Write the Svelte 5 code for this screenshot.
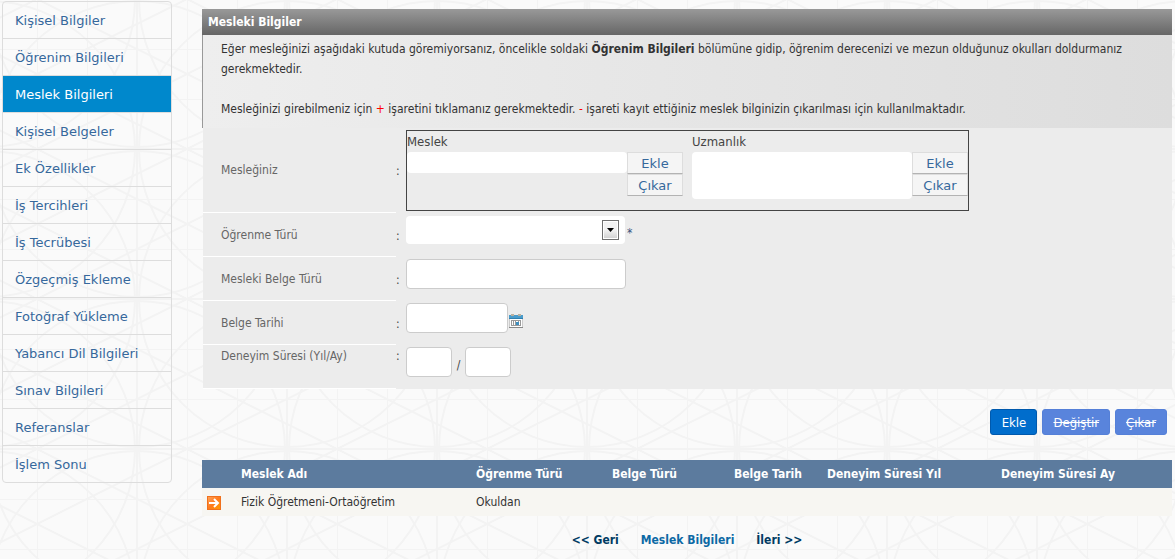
<script>
  const menu = [
    'Kişisel Bilgiler',
    'Öğrenim Bilgileri',
    'Meslek Bilgileri',
    'Kişisel Belgeler',
    'Ek Özellikler',
    'İş Tercihleri',
    'İş Tecrübesi',
    'Özgeçmiş Ekleme',
    'Fotoğraf Yükleme',
    'Yabancı Dil Bilgileri',
    'Sınav Bilgileri',
    'Referanslar',
    'İşlem Sonu',
  ];
  let active = $state('Meslek Bilgileri');

  let form = $state({ meslek: '', uzmanlik: '', tur: '', belge: '', tarih: '', yil: '', ay: '' });

  const rows = [
    { ad: 'Fizik Öğretmeni-Ortaöğretim', tur: 'Okuldan', belge: '', tarih: '', yil: '', ay: '' },
  ];
</script>

<div class="page">
  <nav class="side" aria-label="Özgeçmiş">
    {#each menu as item}
      <a href="#{item}" class:active={item === active} onclick={() => (active = item)}>{item}</a>
    {/each}
  </nav>

  <main>
    <h1>Mesleki Bilgiler</h1>
    <div class="info">
      <p>
        Eğer mesleğinizi aşağıdaki kutuda göremiyorsanız, öncelikle soldaki <b>Öğrenim Bilgileri</b> bölümüne gidip,
        öğrenim derecenizi ve mezun olduğunuz okulları doldurmanız gerekmektedir.
      </p>
      <p>
        Mesleğinizi girebilmeniz için <span class="red">+</span> işaretini tıklamanız gerekmektedir. <span class="red">-</span>
        işareti kayıt ettiğiniz meslek bilginizin çıkarılması için kullanılmaktadır.
      </p>
    </div>

    <form onsubmit={(e) => e.preventDefault()}>
      <div class="row tall">
        <span class="label">Mesleğiniz</span>
        <span class="colon">:</span>
        <div class="picker">
          <div class="pick">
            <label for="meslek">Meslek</label>
            <div class="pick-body">
              <input id="meslek" class="plain" bind:value={form.meslek} />
              <div class="pick-btns">
                <button type="button">Ekle</button>
                <button type="button">Çıkar</button>
              </div>
            </div>
          </div>
          <div class="pick">
            <label for="uzmanlik">Uzmanlık</label>
            <div class="pick-body">
              <textarea id="uzmanlik" class="plain" bind:value={form.uzmanlik}></textarea>
              <div class="pick-btns">
                <button type="button">Ekle</button>
                <button type="button">Çıkar</button>
              </div>
            </div>
          </div>
        </div>
      </div>

      <div class="row">
        <label class="label" for="tur">Öğrenme Türü</label>
        <span class="colon">:</span>
        <div class="field">
          <div class="select">
            <select id="tur" bind:value={form.tur}>
              <option value=""></option>
              <option value="okul">Okuldan</option>
            </select>
            <span class="arrow">
              <svg width="7" height="4" viewBox="0 0 7 4"><path d="M0 0h7L3.5 4z" /></svg>
            </span>
          </div>
          <span class="star">*</span>
        </div>
      </div>

      <div class="row">
        <label class="label" for="belge">Mesleki Belge Türü</label>
        <span class="colon">:</span>
        <div class="field"><input id="belge" class="wide" bind:value={form.belge} /></div>
      </div>

      <div class="row">
        <label class="label" for="tarih">Belge Tarihi</label>
        <span class="colon">:</span>
        <div class="field">
          <input id="tarih" class="date" bind:value={form.tarih} />
          <button type="button" class="cal" aria-label="Takvim">
            <svg width="15" height="15" viewBox="0 0 15 15">
              <path fill="#fff" stroke="#ccc" d="M.5 4.500h13v9H.5z" />
              <path fill="#4a9ccb" d="M0 1h14v4H0z" />
              <path fill="#2f7fb0" d="M0 4h14v1H0z" />
              <path fill="#b9b0a0" d="M2 0h3v2H2zM9 0h3v2H9z" />
              <path stroke="#999" fill="none" d="M2.500 6v6M4.500 6v6M6.500 6v6M9.500 6v6M11.500 6v6M2 6.500h10M2 11.500h10" />
              <path fill="#3d8fc0" d="M7 8h3v3H7z" />
              <path fill="#888" d="M0 13h14v1H0z" />
            </svg>
          </button>
        </div>
      </div>

      <div class="row top">
        <label class="label" for="yil">Deneyim Süresi (Yıl/Ay)</label>
        <span class="colon">:</span>
        <div class="field">
          <input id="yil" class="num" bind:value={form.yil} />
          <label class="slash" for="ay">/</label>
          <input id="ay" class="num" bind:value={form.ay} />
        </div>
      </div>
    </form>

    <div class="actions">
      <button type="button">Ekle</button>
      <button type="button" disabled>Değiştir</button>
      <button type="button" disabled>Çıkar</button>
    </div>

    <table>
      <colgroup>
        <col class="c-icon" /><col class="c-ad" /><col class="c-tur" /><col class="c-belge" />
        <col class="c-tarih" /><col class="c-yil" /><col />
      </colgroup>
      <thead>
        <tr>
          <th></th>
          <th>Meslek Adı</th>
          <th>Öğrenme Türü</th>
          <th>Belge Türü</th>
          <th>Belge Tarih</th>
          <th>Deneyim Süresi Yıl</th>
          <th>Deneyim Süresi Ay</th>
        </tr>
      </thead>
      <tbody>
        {#each rows as r}
          <tr>
            <td class="go">
              <button type="button" aria-label="Seç">
                <svg width="14" height="14" viewBox="0 0 14 14">
                  <defs>
                    <linearGradient id="org" x1="0" y1="0" x2="1" y2="1">
                      <stop offset="0" stop-color="#ffa45c" />
                      <stop offset=".5" stop-color="#ff7a1c" />
                      <stop offset="1" stop-color="#ff9d00" />
                    </linearGradient>
                  </defs>
                  <rect x=".5" y=".5" width="13" height="13" fill="url(#org)" stroke="#f0701c" />
                  <path d="M2 7h9M7 3l4 4-4 4" fill="none" stroke="#fff" stroke-width="2" />
                </svg>
              </button>
            </td>
            <td>{r.ad}</td>
            <td>{r.tur}</td>
            <td>{r.belge}</td>
            <td>{r.tarih}</td>
            <td>{r.yil}</td>
            <td>{r.ay}</td>
          </tr>
        {/each}
      </tbody>
    </table>

    <div class="pager">
      <a href="#geri">&lt;&lt; Geri</a>
      <a href="#meslek" class="current">Meslek Bilgileri</a>
      <a href="#ileri">İleri &gt;&gt;</a>
    </div>
  </main>
</div>

<style>
  /* faint geometric tile, repeats every 150px */
  :global(body) {
    background: #fafafa
      url("data:image/svg+xml,%3Csvg xmlns='http://www.w3.org/2000/svg' width='150' height='150' fill='none' stroke='%23f3f3f3' stroke-width='2'%3E%3Cpath stroke-width='1' d='M50.500 0v150M100.500 0v150M0 50.500h150M0 100.500h150'/%3E%3Cpath d='M0 0v150M150 0v150M0 0h150M0 150h150M0-25l150 75M0 50l150 75M0 125l150 75M0 25L150-50M0 100L150 25M0 175L150 100'/%3E%3Ccircle r='148'/%3E%3Ccircle cx='150' r='148'/%3E%3Ccircle cy='150' r='148'/%3E%3Ccircle cx='150' cy='150' r='148'/%3E%3C/svg%3E")
      -13px -1px;
  }

  .page {
    display: flex;
    align-items: flex-start;
    gap: 30px;
    padding: 1px 3px 0 2px;
    font-family: 'DejaVu Sans Condensed', 'DejaVu Sans', Tahoma, sans-serif;
    font-stretch: condensed;
    font-size: 12px;
    color: #333;
  }
  button, input, select, textarea {
    box-sizing: border-box;
    margin: 0;
    font: inherit;
  }

  .side {
    flex: 0 0 168px;
    border: 1px solid #ddd;
    border-radius: 4px;
    font-family: 'DejaVu Sans', Verdana, sans-serif;
    font-stretch: normal;
    font-size: 13px;
  }
  .side a {
    display: block;
    height: 36px;
    padding-left: 12px;
    border-bottom: 1px solid #ddd;
    line-height: 37px;
    color: #36689c;
    text-decoration: none;
  }
  .side a:last-child { border-bottom: 0; }
  .side a.active {
    background: #0088cc;
    color: #fff;
  }

  main {
    flex: 1;
    min-width: 0;
    padding-top: 8px;
  }
  h1 {
    margin: 0;
    padding-left: 6px;
    height: 26px;
    line-height: 26px;
    font-size: 12px;
    color: #fff;
    background: linear-gradient(#999, #666);
  }
  .info {
    box-sizing: border-box;
    height: 93px;
    padding: 4px 40px 0 18px;
    border-left: 1px solid #999;
    line-height: 20px;
    background: linear-gradient(90deg, #eee, #ddd);
  }
  .info p { margin: 0 0 20px; }
  .red { color: #f00; }

  form {
    margin-left: 1px;
    background: #ececec;
    color: #666;
  }
  .row {
    display: grid;
    grid-template-columns: 193px 10px 1fr;
    height: 44px;
  }
  .row.tall { height: 85px; }
  .label {
    display: flex;
    align-items: center;
    padding-left: 18px;
    border-bottom: 1px solid #fff;
  }
  .colon {
    align-self: center;
    padding-top: 1px;
    color: #444;
  }
  .top .label {
    align-items: flex-start;
    padding-top: 4px;
  }
  .top .colon {
    align-self: start;
    padding-top: 4px;
  }
  .field {
    display: flex;
    align-items: flex-start;
    padding-top: 2px;
  }
  .field input {
    height: 30px;
    border: 1px solid #ccc;
    border-radius: 4px;
    background: #fff;
  }
  .wide { width: 220px; }
  .date { width: 102px; }
  .num { width: 46px; }
  .slash {
    width: 13px;
    padding-top: 11px;
    text-align: center;
    color: #444;
  }
  .cal {
    padding: 0;
    margin: 11px 0 0 1px;
    border: 0;
    background: none;
    line-height: 0;
  }

  .picker {
    align-self: start;
    justify-self: start;
    display: flex;
    gap: 9px;
    box-sizing: border-box;
    height: 81px;
    margin-top: 2px;
    border: 1px solid #444;
    font-size: 13px;
    color: #444;
  }
  .pick label {
    display: block;
    height: 21px;
    line-height: 21px;
  }
  .pick-body { display: flex; }
  .plain {
    width: 220px;
    height: 21px;
    border: 0;
    border-radius: 4px;
    background: #fff;
    resize: none;
  }
  textarea.plain { height: 47px; }
  .pick-btns {
    display: flex;
    flex-direction: column;
  }
  .pick-btns button {
    width: 56px;
    height: 22px;
    padding: 0;
    border: 1px solid #ddd;
    border-bottom-color: #b3b3b3;
    background: #f5f5f5;
    font-family: 'DejaVu Sans', Verdana, sans-serif;
    font-stretch: normal;
    color: #36689c;
  }

  .select {
    position: relative;
    width: 219px;
    height: 28px;
    margin-top: 1px;
  }
  .select select {
    width: 100%;
    height: 100%;
    border: 0;
    border-radius: 4px;
    background: #fff;
    appearance: none;
  }
  .arrow {
    position: absolute;
    right: 6px;
    top: 4px;
    display: flex;
    align-items: center;
    justify-content: center;
    box-sizing: border-box;
    width: 17px;
    height: 20px;
    border: 1px solid #707070;
    background: linear-gradient(#f2f2f2 50%, #cfcfcf);
    box-shadow: inset 0 0 0 1px #fff;
    pointer-events: none;
  }
  .star {
    padding: 11px 0 0 2px;
    color: #36527c;
  }

  .actions {
    display: flex;
    justify-content: flex-end;
    gap: 5px;
    padding: 20px 5px 25px 0;
  }
  .actions button {
    min-width: 47px;
    height: 26px;
    padding: 0 10px;
    border: 1px solid #0059ad;
    border-radius: 3px;
    background: #006dcc;
    color: #fff;
    font-size: 13px;
  }
  .actions button:disabled {
    border-color: #5580d8;
    background: #5984dc;
    text-decoration: line-through;
  }

  table {
    width: 100%;
    border-collapse: collapse;
    table-layout: fixed;
  }
  .c-icon { width: 39px; }
  .c-ad { width: 235px; }
  .c-tur { width: 136px; }
  .c-belge { width: 122px; }
  .c-tarih { width: 93px; }
  .c-yil { width: 174px; }
  th, td {
    height: 28px;
    padding: 0;
    text-align: left;
    white-space: nowrap;
  }
  th {
    background: #5c7b9e;
    color: #fff;
  }
  td { background: #f7f6f2; }
  .go button {
    display: block;
    padding: 0;
    margin: 2px 0 0 5px;
    border: 0;
    background: none;
    line-height: 0;
  }

  .pager {
    display: flex;
    justify-content: center;
    gap: 22px;
    padding-top: 17px;
    font-weight: bold;
  }
  .pager a {
    color: #003a63;
    text-decoration: none;
  }
  .pager .current { color: #0c69a5; }
</style>
